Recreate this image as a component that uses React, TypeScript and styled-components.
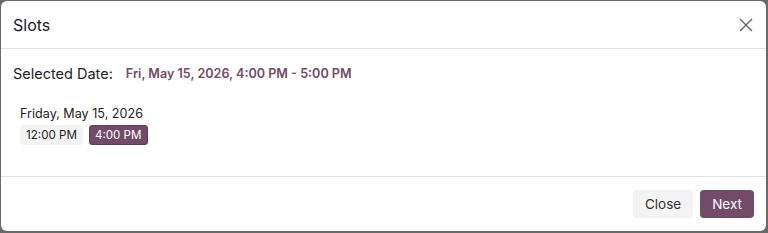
import { FC } from "react";
import styled, { createGlobalStyle } from "styled-components";

const GlobalStyle = createGlobalStyle`
  html, body {
    margin: 0;
    padding: 0;
    background: #6a6a6a;
    font-family: Inter, "Noto Sans", sans-serif;
  }
`;

const Backdrop = styled.div`
  width: 768px;
  height: 233px;
  padding: 1px 2px 2px 1px;
  box-sizing: border-box;
  background: #6a6a6a;
`;

const Modal = styled.div`
  height: 100%;
  background: #fff;
  border-radius: 6px;
  display: flex;
  flex-direction: column;
  overflow: hidden;
`;

const Header = styled.div`
  height: 47px;
  display: flex;
  align-items: center;
  justify-content: space-between;
  padding: 0 12px 0 12px;
  border-bottom: 1px solid #dee2e6;
`;

const Title = styled.div`
  font-size: 16px;
  color: #222;
`;

const CloseIcon = styled.button`
  border: none;
  background: none;
  padding: 0;
  width: 16px;
  height: 16px;
  display: flex;
  cursor: pointer;
`;

const Body = styled.div`
  flex: 1;
  padding: 14px 12px 0;
`;

const SelectedRow = styled.div`
  display: flex;
  align-items: center;
  height: 20px;
  gap: 13px;
`;

const Label = styled.span`
  font-size: 14.5px;
  color: #222;
`;

const Highlight = styled.span`
  font-size: 12.6px;
  font-weight: 600;
  color: #714b67;
`;

const DayGroup = styled.div`
  margin-top: 22px;
  padding-left: 7px;
`;

const DayLabel = styled.div`
  font-size: 12.6px;
  color: #222;
  line-height: 18px;
`;

const SlotRow = styled.div`
  display: flex;
  gap: 6px;
  margin-top: 2px;
`;

const Slot = styled.div<{ $active?: boolean }>`
  height: 20px;
  padding: 0 5px;
  display: flex;
  align-items: center;
  font-size: 11.6px;
  border-radius: 3px;
  box-sizing: border-box;
  background: ${(p) => (p.$active ? "#714b67" : "#f3f3f3")};
  color: ${(p) => (p.$active ? "#fff" : "#222")};
  border: 1px solid ${(p) => (p.$active ? "#5f3d56" : "#f3f3f3")};
`;

const Footer = styled.div`
  height: 54px;
  border-top: 1px solid #dee2e6;
  display: flex;
  align-items: center;
  justify-content: flex-end;
  gap: 7px;
  padding: 0 12px 0 0;
`;

const Button = styled.button<{ $primary?: boolean }>`
  height: 28px;
  padding: 0 12px;
  border: none;
  border-radius: 4px;
  font-family: Inter, "Noto Sans", sans-serif;
  font-size: 13.5px;
  background: ${(p) => (p.$primary ? "#714b67" : "#f3f3f3")};
  color: ${(p) => (p.$primary ? "#fff" : "#333")};
`;

const App: FC = () => {
  return (
    <>
      <GlobalStyle />
      <Backdrop>
        <Modal>
          <Header>
            <Title>Slots</Title>
            <CloseIcon aria-label="Close">
              <svg width="16" height="16" viewBox="0 0 16 16">
                <path d="M2 2 L14 14 M14 2 L2 14" stroke="#666" strokeWidth="1.4" />
              </svg>
            </CloseIcon>
          </Header>
          <Body>
            <SelectedRow>
              <Label>Selected Date:</Label>
              <Highlight>Fri, May 15, 2026, 4:00 PM - 5:00 PM</Highlight>
            </SelectedRow>
            <DayGroup>
              <DayLabel>Friday, May 15, 2026</DayLabel>
              <SlotRow>
                <Slot>12:00 PM</Slot>
                <Slot $active>4:00 PM</Slot>
              </SlotRow>
            </DayGroup>
          </Body>
          <Footer>
            <Button>Close</Button>
            <Button $primary>Next</Button>
          </Footer>
        </Modal>
      </Backdrop>
    </>
  );
};

export default App;
